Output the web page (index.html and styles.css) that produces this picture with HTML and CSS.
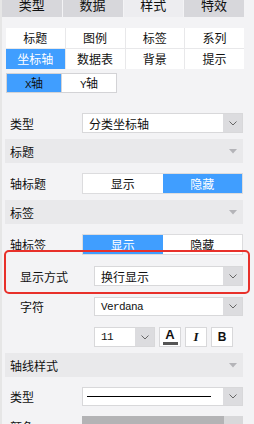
FILE: index.html
```html
<!DOCTYPE html>
<html lang="zh-CN">
<head>
    <meta charset="UTF-8">
    <meta name="viewport" content="width=device-width, initial-scale=1.0">
    <title>坐标轴样式</title>
    <link rel="stylesheet" href="styles.css">
</head>
<body>
    <div class="page">
        <div class="side"></div>
        <div class="panel">
            <div class="tabs">
                <div class="tab">类型</div>
                <div class="tab">数据</div>
                <div class="tab active">样式</div>
                <div class="tab">特效</div>
            </div>

            <div class="subtabs">
                <div class="subtab">标题</div>
                <div class="subtab">图例</div>
                <div class="subtab">标签</div>
                <div class="subtab">系列</div>
                <div class="subtab active">坐标轴</div>
                <div class="subtab">数据表</div>
                <div class="subtab">背景</div>
                <div class="subtab">提示</div>
            </div>

            <div class="axis-switch">
                <div class="axis active"><span class="latin">X</span>轴</div>
                <div class="axis"><span class="latin">Y</span>轴</div>
            </div>

            <div class="field first">
                <span class="label">类型</span>
                <div class="select">
                    <span class="value">分类坐标轴</span>
                    <span class="drop"><svg width="8" height="5" viewBox="0 0 8 5"><polyline points="0.5,0.5 4,4 7.5,0.5" fill="none" stroke="#666" stroke-width="1"/></svg></span>
                </div>
            </div>

            <div class="group">
                <span>标题</span>
                <svg class="caret" width="8" height="5" viewBox="0 0 8 5"><polygon points="0,0 8,0 4,4.5" fill="#b4b4b8"/></svg>
            </div>

            <div class="field">
                <span class="label">轴标题</span>
                <div class="toggle">
                    <span class="opt">显示</span>
                    <span class="opt on">隐藏</span>
                </div>
            </div>

            <div class="group">
                <span>标签</span>
                <svg class="caret" width="8" height="5" viewBox="0 0 8 5"><polygon points="0,0 8,0 4,4.5" fill="#b4b4b8"/></svg>
            </div>

            <div class="field">
                <span class="label">轴标签</span>
                <div class="toggle">
                    <span class="opt on">显示</span>
                    <span class="opt">隐藏</span>
                </div>
            </div>

            <!-- 标注框：显示方式 -->
            <div class="field sub marked">
                <span class="label">显示方式</span>
                <div class="select">
                    <span class="value">换行显示</span>
                    <span class="drop"><svg width="8" height="5" viewBox="0 0 8 5"><polyline points="0.5,0.5 4,4 7.5,0.5" fill="none" stroke="#666" stroke-width="1"/></svg></span>
                </div>
                <div class="mark"></div>
            </div>

            <div class="field sub">
                <span class="label">字符</span>
                <div class="select short">
                    <span class="value latin">Verdana</span>
                    <span class="drop"><svg width="8" height="5" viewBox="0 0 8 5"><polyline points="0.5,0.5 4,4 7.5,0.5" fill="none" stroke="#666" stroke-width="1"/></svg></span>
                </div>
            </div>

            <div class="field sub">
                <span class="label"></span>
                <div class="font-tools">
                    <div class="select size">
                        <span class="value latin">11</span>
                        <span class="drop"><svg width="8" height="5" viewBox="0 0 8 5"><polyline points="0.5,0.5 4,4 7.5,0.5" fill="none" stroke="#666" stroke-width="1"/></svg></span>
                    </div>
                    <div class="tool color-a"><span>A</span><i class="bar"></i></div>
                    <div class="tool italic">I</div>
                    <div class="tool bold">B</div>
                </div>
            </div>

            <div class="group">
                <span>轴线样式</span>
                <svg class="caret" width="8" height="5" viewBox="0 0 8 5"><polygon points="0,0 8,0 4,4.5" fill="#b4b4b8"/></svg>
            </div>

            <div class="field">
                <span class="label">类型</span>
                <div class="select short">
                    <span class="value"><span class="line"></span></span>
                    <span class="drop"><svg width="8" height="5" viewBox="0 0 8 5"><polyline points="0.5,0.5 4,4 7.5,0.5" fill="none" stroke="#666" stroke-width="1"/></svg></span>
                </div>
            </div>

            <div class="field">
                <span class="label">颜色</span>
                <div class="select swatch">
                    <span class="value"></span>
                    <span class="drop"></span>
                </div>
            </div>
        </div>
    </div>
</body>
</html>
```

FILE: styles.css
```css
html, body {
    margin: 0;
    padding: 0;
}
body {
    width: 254px;
    height: 424px;
    overflow: hidden;
    background: #e8e8ea;
    font-family: "Noto Sans CJK SC", "Noto Sans", sans-serif;
    font-size: 12px;
    color: #111;
}
.page {
    display: flex;
    height: 424px;
}
.side {
    width: 9px;
    background: #e6e6e6;
}
.panel {
    flex: 1;
    background: #f3f3f5;
    padding: 0 10px 0 3px;
}
.tabs {
    display: grid;
    grid-template-columns: repeat(4, 1fr);
    gap: 1px;
    width: 242px;
    margin-left: -3px;
}
.tab {
    height: 17px;
    line-height: 9px;
    text-align: center;
    background: #d7d7db;
    font-size: 13px;
}
.tab.active {
    background: #ededf0;
}
.subtabs {
    display: grid;
    grid-template-columns: repeat(4, 1fr);
    gap: 1px;
    margin: 11px 0 0 1px;
    background: #e8e8ea;
}
.subtab {
    height: 20px;
    line-height: 20px;
    text-align: center;
    background: #fff;
}
.subtab.active {
    background: #409eff;
    color: #fff;
}
.axis-switch {
    display: inline-flex;
    gap: 1px;
    margin: 4px 0 0 1px;
    background: #d3d3d6;
    border: 1px solid #d3d3d6;
}
.axis {
    width: 54px;
    height: 18px;
    line-height: 18px;
    text-align: center;
    background: #fff;
}
.axis.active {
    background: #409eff;
}
.latin {
    font-family: "Liberation Mono", monospace;
    font-size: 11px;
    letter-spacing: -0.6px;
}
.field {
    display: flex;
    align-items: center;
    margin: 10px 1px 0 0;
    padding-left: 5px;
}
.field.first {
    margin-top: 20px;
}
.field.sub {
    margin-top: 11px;
    padding-left: 15px;
}
.label {
    width: 72px;
    flex: none;
}
.sub .label {
    width: 74px;
}
.select {
    flex: 1;
    display: flex;
    height: 20px;
    box-sizing: border-box;
    border: 1px solid #d8d8da;
    background: #fff;
}
.select.short {
    height: 19px;
}
.select .value {
    flex: 1;
    display: flex;
    align-items: center;
    padding-left: 6px;
    white-space: nowrap;
}
.select .drop {
    width: 19px;
    display: flex;
    align-items: center;
    justify-content: center;
    background: #dcdcdf;
}
.select .line {
    display: block;
    width: 124px;
    height: 1px;
    margin-left: -2px;
    background: #000;
}
.select.swatch {
    border: none;
}
.select.swatch .value {
    background: #b3b3b5;
}
.select.swatch .drop {
    background: #d8d8da;
}
.group {
    display: flex;
    align-items: center;
    justify-content: space-between;
    height: 24px;
    margin: 6px 1px 0 0;
    padding: 0 6px 0 5px;
    background: #e9e9eb;
}
.caret {
    display: block;
}
.toggle {
    flex: 1;
    display: flex;
    height: 21px;
    box-sizing: border-box;
    border: 1px solid #dcdcde;
    background: #fff;
}
.opt {
    flex: 1;
    text-align: center;
    line-height: 19px;
}
.opt.on {
    background: #409eff;
    color: #fff;
}
.marked {
    position: relative;
}
.mark {
    position: absolute;
    top: -16px;
    bottom: -8px;
    left: -1px;
    right: -7px;
    border: 2px solid #e8302a;
    border-radius: 5px;
}
.font-tools {
    flex: 1;
    display: flex;
    gap: 4px;
}
.select.size {
    flex: none;
    width: 61px;
    margin-right: 0;
}
.tool {
    width: 22px;
    height: 20px;
    box-sizing: border-box;
    border: 1px solid #d8d8da;
    background: #fff;
    text-align: center;
    line-height: 18px;
}
.color-a {
    position: relative;
    font-family: "Liberation Sans", Arial, sans-serif;
    font-weight: bold;
    font-size: 13px;
    line-height: 14px;
}
.color-a .bar {
    display: block;
    width: 15px;
    height: 3px;
    margin: 0 auto;
    background: #555;
}
.italic {
    font-family: "Liberation Serif", serif;
    font-style: italic;
    font-weight: bold;
    font-size: 13px;
}
.bold {
    font-family: "Liberation Sans", Arial, sans-serif;
    font-weight: bold;
    font-size: 12px;
}
```
